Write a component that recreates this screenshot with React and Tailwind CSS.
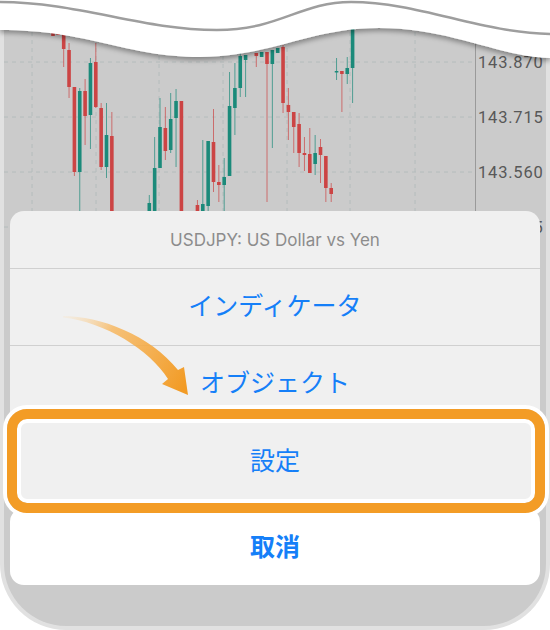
import React from 'react';

const GREEN = '#1b8a7a';
const RED = '#cc4444';

// [slot, bodyTop, bodyBottom, wickTop, wickBottom, isUp]
const candles = [
  [0, 33, 36, 33, 36, 0],
  [1, 33, 35, 33, 35, 0],
  [2, 34, 49, 34, 67, 0],
  [3, 50, 87, 43, 98, 0],
  [4, 87, 172, 87, 176, 0],
  [5, 91, 172, 88, 240, 1],
  [6, 91, 116, 79, 145, 0],
  [7, 63, 115, 58, 149, 1],
  [8, 62, 107, 43, 108, 0],
  [9, 108, 167, 103, 170, 0],
  [10, 135, 167, 103, 178, 1],
  [11, 136, 240, 112, 240, 0],
  [18, 203, 240, 195, 240, 1],
  [19, 168, 240, 137, 240, 1],
  [20, 127, 168, 98, 168, 1],
  [21, 128, 151, 107, 160, 0],
  [22, 119, 150, 93, 153, 1],
  [23, 101, 118, 89, 167, 1],
  [24, 101, 240, 101, 240, 0],
  [27, 205, 240, 200, 240, 0],
  [28, 204, 240, 140, 240, 1],
  [29, 141, 206, 141, 215, 1],
  [30, 142, 182, 109, 192, 0],
  [31, 182, 185, 165, 202, 0],
  [32, 177, 185, 158, 215, 1],
  [33, 106, 176, 72, 176, 1],
  [34, 88, 108, 63, 135, 1],
  [35, 56, 88, 50, 97, 1],
  [36, 55, 60, 55, 97, 1],
  [38, 53, 56, 53, 67, 0],
  [39, 52, 57, 52, 57, 1],
  [40, 52, 64, 52, 202, 0],
  [41, 50, 64, 50, 148, 1],
  [42, 48, 53, 48, 53, 1],
  [43, 47, 103, 45, 113, 0],
  [44, 105, 112, 88, 140, 0],
  [45, 112, 127, 112, 153, 0],
  [46, 124, 153, 113, 167, 0],
  [47, 153, 155, 137, 171, 0],
  [48, 154, 173, 128, 173, 0],
  [49, 153, 164, 135, 175, 1],
  [50, 147, 155, 139, 183, 0],
  [51, 156, 188, 156, 202, 0],
  [52, 188, 194, 183, 202, 0],
  [53, 71, 72, 58, 80, 1],
  [54, 71, 74, 71, 112, 0],
  [55, 68, 74, 57, 84, 1],
  [56, 20, 68, 20, 103, 1],
];

const gridX = [32, 96, 159, 223, 287, 350, 415];
const prices = ['143.870', '143.715', '143.560', '143.405'];

const Chart = () => (
  <svg className="absolute left-0 top-0" width="542" height="240" viewBox="4 0 542 240">
    {gridX.map((x) => (
      <line key={x} x1={x} x2={x} y1={0} y2={240} stroke="#b4bcbc" strokeWidth="1" strokeDasharray="4 4" />
    ))}
    {prices.map((p, i) => (
      <line key={p} x1={4} x2={475} y1={62 + i * 55} y2={62 + i * 55} stroke="#b4bcbc" strokeWidth="1" strokeDasharray="4 4" />
    ))}
    <line x1={475.5} x2={475.5} y1={0} y2={240} stroke="#9a9a9a" strokeWidth="1" />
    {prices.map((p, i) => (
      <text
        key={p}
        x={478}
        y={62 + i * 55 + 5.5}
        fontSize="16.5"
        letterSpacing="0.8"
        fill="#585858"
        fontFamily="Roboto, 'Liberation Sans', sans-serif"
      >
        {p}
      </text>
    ))}
    {candles.map(([slot, bt, bb, wt, wb, up]) => {
      const x = 53 + slot * 5.35;
      const c = up ? GREEN : RED;
      return (
        <g key={slot}>
          <line x1={x} x2={x} y1={wt} y2={wb} stroke={c} strokeWidth="1" opacity="0.7" />
          <rect x={x - 1.8} y={bt} width="3.6" height={Math.max(bb - bt, 1.5)} fill={c} />
        </g>
      );
    })}
  </svg>
);

const Wave = () => (
  <svg className="absolute left-0 top-0" width="550" height="75" viewBox="0 0 550 75">
    <defs>
      <filter id="edgeShadow" x="-5%" y="-20%" width="110%" height="160%">
        <feDropShadow dx="0" dy="3" stdDeviation="2.5" floodColor="#000" floodOpacity="0.35" />
      </filter>
    </defs>
    <path
      d="M0,0 H550 V58 C500,57 450,28 379,28 C310,28 270,57 200,57 C125,57 90,30 0,30 Z"
      fill="#fff"
      filter="url(#edgeShadow)"
    />
    <path
      d="M-2,2 C80,2 140,30 217,30 C280,30 300,2 351,2 C420,2 480,33 552,34"
      fill="none"
      stroke="#9e9e9e"
      strokeWidth="2.5"
    />
  </svg>
);

const Arrow = () => (
  <svg className="absolute left-[55px] top-[305px]" width="140" height="95" viewBox="55 305 140 95">
    <defs>
      <linearGradient id="arrowFade" x1="63" y1="316" x2="185" y2="385" gradientUnits="userSpaceOnUse">
        <stop offset="0" stopColor="#fbe0b8" stopOpacity="0.2" />
        <stop offset="0.35" stopColor="#f7b55a" stopOpacity="0.8" />
        <stop offset="1" stopColor="#f29b25" />
      </linearGradient>
    </defs>
    <path
      d="M63,316 C100,316 150,335 178,370 L184,367 L188,395 L162,384 L168,379 C150,350 105,322 63,317.5 Z"
      fill="url(#arrowFade)"
    />
  </svg>
);

const Row = ({ children, last }) => (
  <div
    className={`flex h-[77px] items-center justify-center text-[25px] text-[#157ff8] ${
      last ? '' : 'border-b border-[#d0d0d0]'
    }`}
  >
    {children}
  </div>
);

export default function App() {
  return (
    <div className="relative h-[630px] w-[550px] overflow-hidden bg-white font-['Inter','Noto_Sans_CJK_JP',sans-serif]">
      <div className="relative flex h-full flex-col justify-end rounded-b-[66px] border-x-4 border-b-4 border-[#e1e1e1] bg-[#cbcbcb] px-[6px] pb-[41px]">
        <Chart />

        {/* action sheet */}
        <div className="relative flex flex-col overflow-hidden rounded-[14px] bg-[#f0f0f0]">
          <div className="flex h-[58px] items-center justify-center border-b border-[#d0d0d0] pt-[2px] text-[17px] text-[#8c8c8c]">
            USDJPY: US Dollar vs Yen
          </div>
          <Row>インディケータ</Row>
          <Row>オブジェクト</Row>
          <Row last>設定</Row>
        </div>
        <div className="relative mt-[8px] flex h-[77px] items-center justify-center rounded-[14px] bg-white pt-[2px] text-[25px] font-bold text-[#157ff8]">
          取消
        </div>
      </div>

      <Arrow />
      {/* highlight around 設定 */}
      <div className="absolute left-[7px] top-[409px] h-[104px] w-[538px] rounded-[20px] border-[10px] border-[#f39c26] shadow-[0_0_0_4px_#fff,inset_0_0_0_4px_#fff]" />
      <Wave />
    </div>
  );
}
